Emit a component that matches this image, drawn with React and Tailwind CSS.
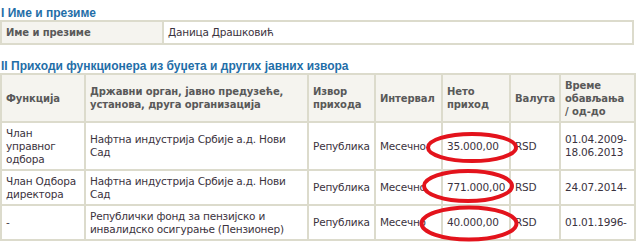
export default function App() {
  const rows = [
    {
      fn: "Члан управног одбора",
      org: "Нафтна индустрија Србије а.д. Нови Сад",
      src: "Република",
      interval: "Месечно",
      net: "35.000,00",
      cur: "RSD",
      time: "01.04.2009-18.06.2013",
    },
    {
      fn: "Члан Одбора директора",
      org: "Нафтна индустрија Србије а.д. Нови Сад",
      src: "Република",
      interval: "Месечно",
      net: "771.000,00",
      cur: "RSD",
      time: "24.07.2014-",
    },
    {
      fn: "-",
      org: "Републички фонд за пензијско и инвалидско осигурање (Пензионер)",
      src: "Република",
      interval: "Месечно",
      net: "40.000,00",
      cur: "RSD",
      time: "01.01.1996-",
    },
  ];

  const th =
    "border-2 border-[#dcdbcc] bg-[#f5f4ef] px-[4px] py-[2px] text-left align-middle font-bold text-[10px] tracking-[-0.1px] text-[#595959]";
  const td =
    "border-2 border-[#dcdbcc] px-[4px] py-[2px] text-left align-middle text-[10.5px] tracking-[-0.2px] text-[#3b3340]";

  return (
    <div className="relative w-[639px] h-[251px] bg-white font-['DejaVu_Sans',sans-serif] text-[11px] leading-[13px]">
      <h2 className="pt-[7px] pl-[1px] font-['Liberation_Sans',Arial,sans-serif] text-[12px] leading-[13px] font-bold text-[#1f6ea8]">
        I Име и презиме
      </h2>
      <table className="w-[634px] table-fixed border-collapse">
        <colgroup>
          <col className="w-[162px]" />
          <col />
        </colgroup>
        <tbody>
          <tr className="h-[23px]">
            <td className={th}>Име и презиме</td>
            <td className={td}>Даница Драшковић</td>
          </tr>
        </tbody>
      </table>

      <h2 className="pt-[15px] pl-[1px] font-['Liberation_Sans',Arial,sans-serif] text-[12px] leading-[13px] font-bold text-[#1f6ea8]">
        II Приходи функционера из буџета и других јавних извора
      </h2>
      <table className="w-[634px] table-fixed border-collapse">
        <colgroup>
          <col className="w-[84px]" />
          <col className="w-[223px]" />
          <col className="w-[67px]" />
          <col className="w-[67px]" />
          <col className="w-[68px]" />
          <col className="w-[50px]" />
          <col className="w-[75px]" />
        </colgroup>
        <thead>
          <tr className="h-[48px]">
            <th className={th}>Функција</th>
            <th className={th}>Државни орган, јавно предузеће, установа, друга организација</th>
            <th className={th}>Извор прихода</th>
            <th className={th}>Интервал</th>
            <th className={th}>Нето приход</th>
            <th className={th}>Валута</th>
            <th className={th}>Време обављања / од-до</th>
          </tr>
        </thead>
        <tbody>
          {rows.map((r, i) => (
            <tr key={i} className={i === 0 ? "h-[48px]" : "h-[35px]"}>
              <td className={td}>{r.fn}</td>
              <td className={td}>{r.org}</td>
              <td className={td}>{r.src}</td>
              <td className={td}>{r.interval}</td>
              <td className={td}>{r.net}</td>
              <td className={td}>{r.cur}</td>
              <td className={td}>{r.time}</td>
            </tr>
          ))}
        </tbody>
      </table>

      {/* red marker circles drawn over the net income column */}
      <svg
        className="pointer-events-none absolute left-0 top-0"
        width="639"
        height="251"
        viewBox="0 0 639 251"
      >
        <g fill="none" stroke="#e3131c" strokeWidth="4">
          <ellipse cx="472" cy="147.5" rx="44" ry="13.5" />
          <ellipse cx="468" cy="186" rx="44" ry="15" />
          <ellipse cx="469" cy="223.5" rx="47.5" ry="16" />
        </g>
      </svg>
    </div>
  );
}
